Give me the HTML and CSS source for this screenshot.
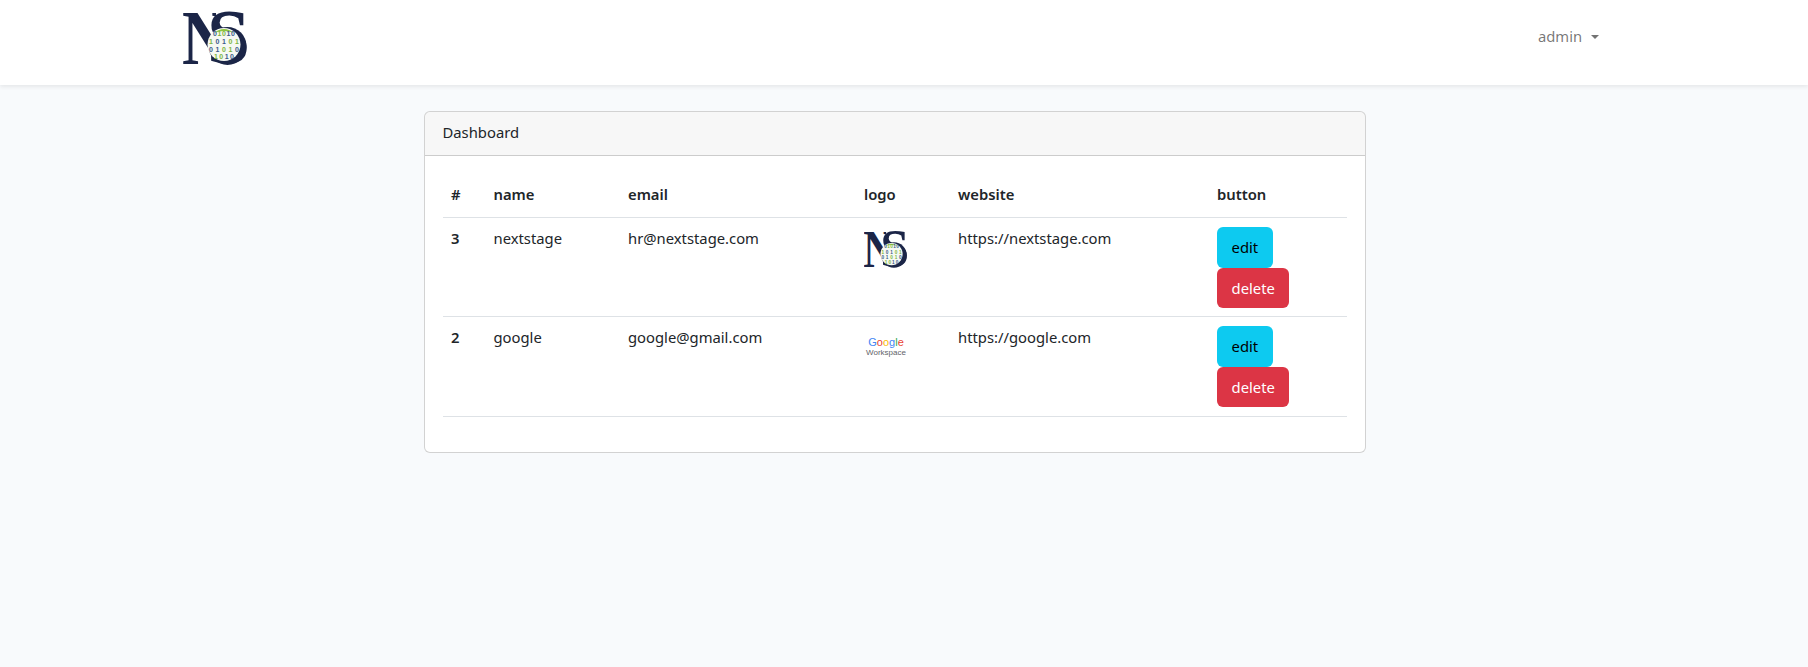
FILE: index.html
```html
<!DOCTYPE html>
<html lang="en">
<head>
    <meta charset="UTF-8">
    <meta name="viewport" content="width=device-width, initial-scale=1.0">
    <title>Dashboard</title>
    <link rel="stylesheet" href="styles.css">
</head>
<body>
    <svg class="defs" width="0" height="0">
        <defs>
            <clipPath id="n-clip">
                <polygon points="0,0 33,0 33,56 0,56"/>
            </clipPath>
            <symbol id="ns-mark" viewBox="0 0 64 56">
                <g clip-path="url(#n-clip)">
                    <text class="ns-letter" x="-1" y="55" font-size="78" textLength="46" lengthAdjust="spacingAndGlyphs">N</text>
                </g>
                <text class="ns-letter" x="24" y="54" font-size="78" textLength="43" lengthAdjust="spacingAndGlyphs">S</text>
                <circle cx="44.5" cy="37" r="19" fill="#1b2547"/>
                <circle cx="41" cy="35.5" r="16.5" fill="#f6f9f2"/>
                <path d="M31 24 Q41 16 51 24 Q41 20 31 24 Z" fill="#8dc63f"/>
                <text class="ns-bits bits-blue" x="30" y="27" textLength="22">0<tspan class="bits-green">10</tspan>10</text>
                <text class="ns-bits bits-green" x="26" y="35" textLength="30">1<tspan class="bits-blue">01</tspan>01</text>
                <text class="ns-bits bits-blue" x="26" y="43" textLength="30">01<tspan class="bits-green">01</tspan>0</text>
                <text class="ns-bits bits-green" x="31" y="50" textLength="20">10<tspan class="bits-blue">10</tspan></text>
            </symbol>
        </defs>
    </svg>

    <nav class="navbar">
        <div class="container nav-inner">
            <a class="brand" href="#">
                <svg class="ns-logo" width="64" height="56"><use href="#ns-mark"/></svg>
            </a>
            <a class="user-link" href="#">admin <span class="caret"></span></a>
        </div>
    </nav>

    <main class="container content">
        <div class="card">
            <div class="card-header">Dashboard</div>
            <div class="card-body">
                <table>
                    <thead>
                        <tr>
                            <th class="col-id">#</th>
                            <th class="col-name">name</th>
                            <th class="col-email">email</th>
                            <th class="col-logo">logo</th>
                            <th class="col-web">website</th>
                            <th class="col-btn">button</th>
                        </tr>
                    </thead>
                    <tbody>
                        <tr>
                            <th>3</th>
                            <td>nextstage</td>
                            <td>hr@nextstage.com</td>
                            <td>
                                <svg class="ns-logo small" width="43" height="38"><use href="#ns-mark"/></svg>
                            </td>
                            <td>https://nextstage.com</td>
                            <td>
                                <a class="btn btn-edit" href="#">edit</a>
                                <a class="btn btn-delete" href="#">delete</a>
                            </td>
                        </tr>
                        <tr>
                            <th>2</th>
                            <td>google</td>
                            <td>google@gmail.com</td>
                            <td>
                                <div class="gw-logo">
                                    <div class="gw-google"><span class="g-blue">G</span><span class="g-red">o</span><span class="g-yellow">o</span><span class="g-blue">g</span><span class="g-green">l</span><span class="g-red">e</span></div>
                                    <div class="gw-work">Workspace</div>
                                </div>
                            </td>
                            <td>https://google.com</td>
                            <td>
                                <a class="btn btn-edit" href="#">edit</a>
                                <a class="btn btn-delete" href="#">delete</a>
                            </td>
                        </tr>
                    </tbody>
                </table>
            </div>
        </div>
    </main>
</body>
</html>
```

FILE: styles.css
```css
body {
    margin: 0;
    background-color: #f8fafc;
    font-family: "Noto Sans", Arial, sans-serif;
    font-size: 14.8px;
    line-height: 23px;
    color: #212529;
}
a {
    text-decoration: none;
}
.defs {
    position: absolute;
}
.container {
    width: 1449px;
    margin: 0 auto;
    box-sizing: border-box;
}
.navbar {
    height: 85px;
    padding-right: 17px;
    background-color: #fff;
    box-shadow: 0 2px 4px rgba(0, 0, 0, .075);
}
.nav-inner {
    height: 85px;
    display: flex;
    justify-content: space-between;
    align-items: flex-start;
    padding: 0 21px 0 12px;
}
.brand {
    display: block;
    padding-top: 9px;
}
.ns-logo {
    display: block;
}
.ns-letter {
    font-family: "Liberation Serif", serif;
    font-weight: bold;
    fill: #1b2547;
}
.ns-bits {
    font-family: "Liberation Sans", sans-serif;
    font-size: 7px;
    font-weight: bold;
}
.bits-blue {
    fill: #3a5a8c;
}
.bits-green {
    fill: #7db53f;
}
.ns-logo.small {
    margin-top: 3px;
}
.user-link {
    margin-top: 25px;
    color: rgba(0, 0, 0, .55);
}
.caret {
    display: inline-block;
    margin-left: 5px;
    vertical-align: 3px;
    border-top: 4.3px solid;
    border-right: 4.3px solid transparent;
    border-left: 4.3px solid transparent;
}
main.content {
    width: auto;
    padding: 26px 19px 0 0;
    display: flex;
    justify-content: center;
}
.card {
    width: 942px;
    background-color: #fff;
    border: 1px solid rgba(0, 0, 0, .175);
    border-radius: 6px;
    box-sizing: border-box;
}
.card-header {
    padding: 9px 18px;
    height: 44px;
    box-sizing: border-box;
    background-color: rgba(0, 0, 0, .03);
    border-bottom: 1px solid rgba(0, 0, 0, .175);
    border-radius: 5px 5px 0 0;
}
.card-body {
    padding: 16px 18px 35px;
}
table {
    width: 100%;
    table-layout: fixed;
    border-collapse: collapse;
    text-align: left;
}
th, td {
    box-sizing: border-box;
    padding: 9px 8px 8px 8.5px;
    vertical-align: top;
    border-bottom: 1px solid #dee2e6;
}
thead th {
    padding: 11px 8px 11px 8.5px;
}
tbody tr:last-child th, tbody tr:last-child td {
    padding-bottom: 9px;
}
th {
    font-weight: 600;
}
.col-id {
    width: 42.5px;
}
.col-name {
    width: 134.5px;
}
.col-email {
    width: 236px;
}
.col-logo {
    width: 94px;
}
.col-web {
    width: 259px;
}
.col-btn {
    width: 138px;
}
.btn {
    display: block;
    width: fit-content;
    padding: 6px 14.6px;
    line-height: 28.5px;
    border-radius: 6px;
}
.btn-edit {
    background-color: #0dcaf0;
    color: #000;
}
.btn-delete {
    background-color: #dc3545;
    color: #fff;
}
.gw-logo {
    width: 44px;
    padding-top: 11px;
    text-align: center;
}
.gw-google {
    font-family: "Liberation Sans", sans-serif;
    font-size: 11px;
    line-height: 11px;
}
.gw-work {
    font-family: "Liberation Sans", sans-serif;
    font-size: 8px;
    line-height: 9px;
    color: #5f6368;
}
.g-blue {
    color: #4285f4;
}
.g-red {
    color: #ea4335;
}
.g-yellow {
    color: #fbbc05;
}
.g-green {
    color: #34a853;
}
```
